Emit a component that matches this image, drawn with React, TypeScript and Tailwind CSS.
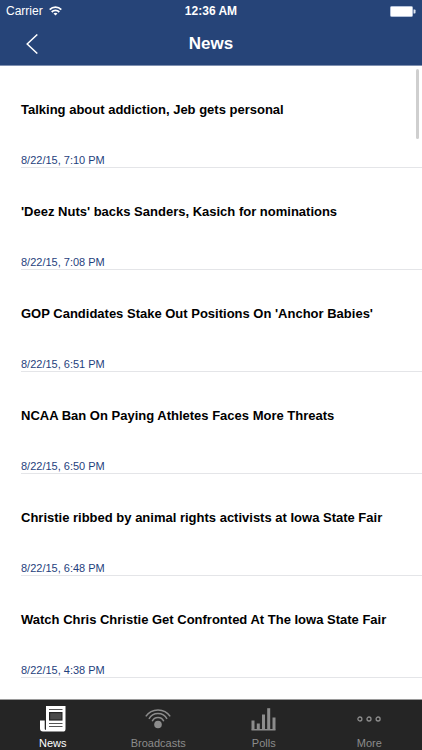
import React from 'react';

interface Story {
  title: string;
  date: string;
}

interface TabProps {
  label: string;
  active?: boolean;
  children: React.ReactNode;
}

const stories: Story[] = [
  { title: 'Talking about addiction, Jeb gets personal', date: '8/22/15, 7:10 PM' },
  { title: "'Deez Nuts' backs Sanders, Kasich for nominations", date: '8/22/15, 7:08 PM' },
  { title: "GOP Candidates Stake Out Positions On 'Anchor Babies'", date: '8/22/15, 6:51 PM' },
  { title: 'NCAA Ban On Paying Athletes Faces More Threats', date: '8/22/15, 6:50 PM' },
  { title: 'Christie ribbed by animal rights activists at Iowa State Fair', date: '8/22/15, 6:48 PM' },
  { title: 'Watch Chris Christie Get Confronted At The Iowa State Fair', date: '8/22/15, 4:38 PM' },
];

const WifiIcon = () => (
  <svg width="13" height="10" viewBox="0 0 13 10" fill="none" stroke="currentColor" strokeWidth="1.8">
    <path d="M0.7 3.6a8.2 8.2 0 0 1 11.6 0" />
    <path d="M2.7 6a5.4 5.4 0 0 1 7.6 0" />
    <path d="M6.5 9.6 4.5 7.6a2.9 2.9 0 0 1 4 0z" fill="currentColor" stroke="none" />
  </svg>
);

const BatteryIcon = () => (
  <svg width="26" height="11" viewBox="0 0 26 11">
    <rect x="0.5" y="0.5" width="22" height="10" rx="1" fill="#fff" stroke="#b4c2da" />
    <path d="M23.5 3.5h1.2q.8 0 .8.8v2.4q0 .8-.8.8h-1.2z" fill="#dfe6f2" />
  </svg>
);

const NewsIcon = () => (
  <svg width="26" height="26" viewBox="0 0 26 26">
    <path d="M6 0h19.5v23q0 2.6-2.6 2.6H3Q0 25.6 0 22.6V14.5h4.8v8q0 1.3.8 1.3.4 0 .4-1z" fill="#fff" />
    <path d="M5.4 14v9.5" stroke="#252525" strokeWidth="1" />
    <path d="M9 3.5h13.5M9 17.5h13.5M9 20.5h13.5" stroke="#555" strokeWidth="1" />
    <rect x="9.6" y="6.6" width="12.3" height="7.4" fill="#4a4a4a" stroke="#252525" strokeWidth="1.2" />
  </svg>
);

const BroadcastIcon = () => (
  <svg width="26" height="20" viewBox="0 0 26 20" fill="none" stroke="currentColor" strokeWidth="1.5">
    <circle cx="13" cy="15.5" r="3.8" fill="currentColor" stroke="none" />
    <path d="M0.8 7.4a14.7 14.7 0 0 1 24.4 0" />
    <path d="M4 9.9a10.1 10.1 0 0 1 18 0" />
    <path d="M7.2 12.3a6.3 6.3 0 0 1 11.6 0" />
  </svg>
);

const PollsIcon = () => (
  <svg width="25" height="23" viewBox="0 0 25 23" fill="currentColor">
    <rect x="0.5" y="12.5" width="3" height="9" />
    <rect x="5.8" y="15.5" width="3" height="6" />
    <rect x="11" y="6.5" width="3" height="15" />
    <rect x="16.2" y="0.2" width="3" height="21.3" />
    <rect x="21.5" y="9.5" width="3" height="12" />
    <rect x="0.5" y="21" width="24" height="1.5" />
  </svg>
);

const MoreIcon = () => (
  <svg width="24" height="6" viewBox="0 0 24 6" fill="none" stroke="currentColor" strokeWidth="1.3">
    <circle cx="2.9" cy="3" r="2" />
    <circle cx="12" cy="3" r="2" />
    <circle cx="21.1" cy="3" r="2" />
  </svg>
);

const Tab: React.FC<TabProps> = ({ label, active, children }) => (
  <button
    type="button"
    className={`flex flex-1 flex-col items-center text-[11px] leading-3 ${active ? 'text-white' : 'text-[#8c8c8c]'}`}
  >
    <span className="flex h-9 items-center">{children}</span>
    <span>{label}</span>
  </button>
);

const App: React.FC = () => {
  return (
    <div className="flex h-screen flex-col bg-white font-['Liberation_Sans',Arial,sans-serif]">
      <header className="border-b border-[#7f90b0] bg-[#264478] text-white">
        <div className="grid h-[22px] grid-cols-3 items-center px-1.5 text-xs">
          <div className="flex items-center gap-1.5">
            <span>Carrier</span>
            <WifiIcon />
          </div>
          <span className="text-center font-bold">12:36 AM</span>
          <div className="flex justify-end">
            <BatteryIcon />
          </div>
        </div>
        <div className="grid h-[43px] grid-cols-3 items-center">
          <button type="button" aria-label="Back" className="w-fit pl-[26px]">
            <svg width="12" height="20" viewBox="0 0 12 20" fill="none" stroke="currentColor" strokeWidth="1.5">
              <path d="M11.3 0.5 1.2 10l10.1 9.5" />
            </svg>
          </button>
          <h1 className="text-center text-[17px] font-bold">News</h1>
        </div>
      </header>

      <main className="relative min-h-0 flex-1 overflow-hidden">
        <ul>
          {stories.map((story) => (
            <li
              key={story.title}
              className="ml-[21px] flex h-[102px] flex-col justify-between border-b border-[#e4e5e8] pt-[34px]"
            >
              <h2 className="text-[13px] leading-5 font-bold text-black">{story.title}</h2>
              <p className="text-[11px] leading-[14px] text-[#1f3f7d]">{story.date}</p>
            </li>
          ))}
        </ul>
        <div className="absolute top-[3px] right-[3px] h-[70px] w-[3px] rounded-full bg-[#cfcfcf]" />
      </main>

      <nav className="flex h-[51px] border-t border-[#9a9a9a] bg-[#252525] pt-px">
        <Tab label="News" active>
          <NewsIcon />
        </Tab>
        <Tab label="Broadcasts">
          <BroadcastIcon />
        </Tab>
        <Tab label="Polls">
          <PollsIcon />
        </Tab>
        <Tab label="More">
          <MoreIcon />
        </Tab>
      </nav>
    </div>
  );
};

export default App;
